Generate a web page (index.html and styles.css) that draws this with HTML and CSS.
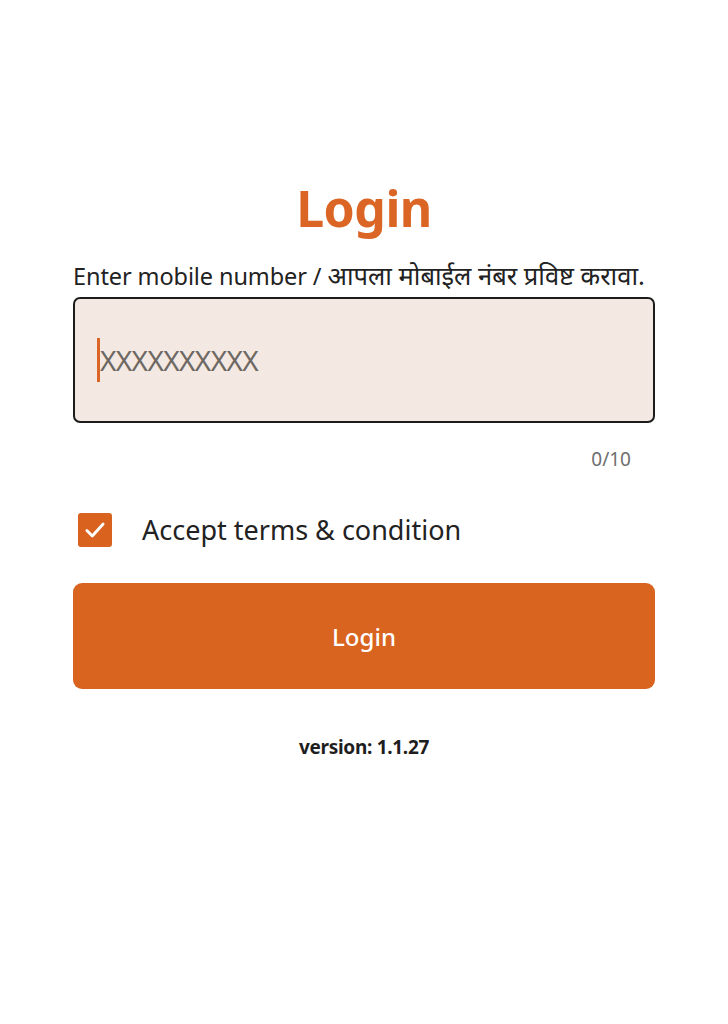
FILE: index.html
```html
<!DOCTYPE html>
<html lang="en">
<head>
<meta charset="utf-8">
<title>Login</title>
<link rel="stylesheet" href="styles.css">
</head>
<body>
<main class="page">
  <h1 class="title">Login</h1>
  <p class="label">Enter mobile number / <span class="deva">आपला मोबाईल नंबर प्रविष्ट करावा.</span></p>
  <div class="field">
    <span class="caret"></span><span class="placeholder">XXXXXXXXXX</span>
  </div>
  <div class="counter">0/10</div>
  <label class="terms">
    <span class="checkbox">
      <svg viewBox="0 0 24 24" width="26" height="26"><path d="M4.5 12.5l5 5 10-11" fill="none" stroke="#fff" stroke-width="2.6" stroke-linecap="round" stroke-linejoin="round"/></svg>
    </span>
    <span class="terms-text">Accept terms &amp; condition</span>
  </label>
  <button class="btn">Login</button>
  <div class="version">version: 1.1.27</div>
</main>
</body>
</html>
```
FILE: styles.css
```css
html, body {
  margin: 0;
  padding: 0;
  background: #ffffff;
}
body {
  font-family: "Noto Sans", "Open Sans", sans-serif;
  color: #222;
}
.page {
  width: 582px;
  margin: 0 auto;
  padding-top: 170px;
  display: flex;
  flex-direction: column;
}
.title {
  margin: 0;
  text-align: center;
  color: #db6524;
  font-size: 50px;
  font-weight: 700;
  line-height: 76px;
  letter-spacing: -0.5px;
}
.label {
  margin: 14px 0 0;
  font-size: 23.5px;
  line-height: 30px;
  color: #222;
  white-space: nowrap;
  letter-spacing: -0.1px;
}
.deva {
  font-size: 25.5px;
  letter-spacing: 0;
}
.field {
  margin-top: 6px;
  height: 126px;
  box-sizing: border-box;
  border: 2px solid #1c1c1c;
  border-radius: 7px;
  background: #f4e8e2;
  display: flex;
  align-items: center;
  padding-left: 22px;
}
.caret {
  width: 3px;
  height: 44px;
  background: #db6524;
}
.placeholder {
  font-size: 28px;
  color: #6e6864;
  letter-spacing: -0.6px;
}
.counter {
  align-self: flex-end;
  margin: 22px 24px 0 0;
  font-size: 19px;
  line-height: 28px;
  color: #6e6e6e;
}
.terms {
  margin-top: 38px;
  display: flex;
  align-items: center;
  gap: 30px;
  padding-left: 5px;
}
.checkbox {
  width: 34px;
  height: 34px;
  border-radius: 3px;
  background: #d9621f;
  display: flex;
  align-items: center;
  justify-content: center;
}
.terms-text {
  font-size: 27px;
  color: #222;
}
.btn {
  margin-top: 35px;
  height: 106px;
  border: none;
  border-radius: 9px;
  background: #d9641f;
  color: #fff;
  font-family: "Noto Sans", "Open Sans", sans-serif;
  font-size: 24px;
  font-weight: 500;
}
.version {
  margin-top: 45px;
  text-align: center;
  font-size: 19px;
  font-weight: 700;
  color: #1e1e1e;
  letter-spacing: -0.3px;
}
```
